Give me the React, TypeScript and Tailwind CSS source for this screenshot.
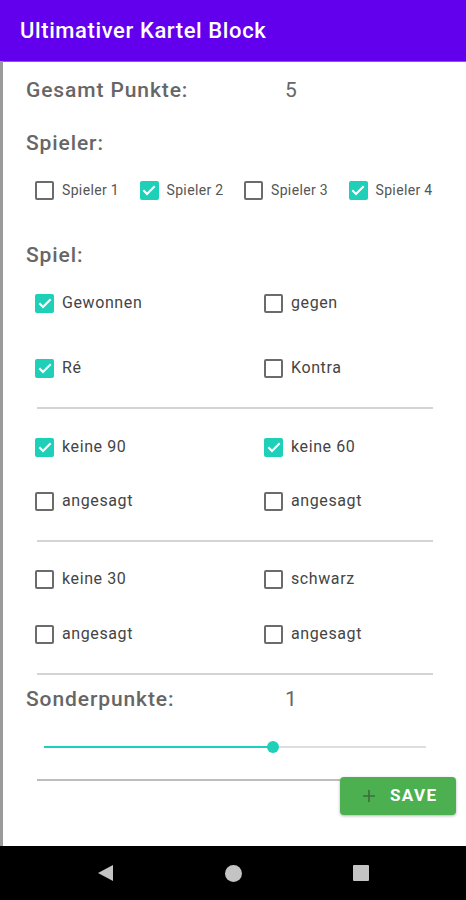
import { useState } from "react";

const font = { fontFamily: "Roboto, 'Liberation Sans', sans-serif" };

function Box({ checked, onClick }: { checked: boolean; onClick: () => void }) {
  return (
    <button
      type="button"
      onClick={onClick}
      className={
        checked
          ? "flex h-[19px] w-[19px] shrink-0 items-center justify-center rounded-[2px] bg-[#1dd0b7]"
          : "h-[19px] w-[19px] shrink-0 rounded-[2px] border-2 border-[#6b6b6b] bg-white"
      }
    >
      {checked && (
        <svg width="16" height="16" viewBox="0 0 24 24" fill="none">
          <path d="M3.5 12.5l5.5 5.5L20.5 6.5" stroke="white" strokeWidth="3.2" />
        </svg>
      )}
    </button>
  );
}

function Check({
  label,
  checked,
  onToggle,
  small,
}: {
  label: string;
  checked: boolean;
  onToggle: () => void;
  small?: boolean;
}) {
  return (
    <label className="flex h-[24px] items-center gap-[8px]">
      <Box checked={checked} onClick={onToggle} />
      <span
        className={
          small
            ? "text-[14px] tracking-[0.35px] text-[#555]"
            : "text-[16px] tracking-[0.6px] text-[#444]"
        }
      >
        {label}
      </span>
    </label>
  );
}

function Divider({ className = "" }: { className?: string }) {
  return <div className={"ml-[34px] h-[2px] w-[396px] bg-[#d4d4d4] " + className} />;
}

export default function App() {
  const [players, setPlayers] = useState([false, true, false, true]);
  const [state, setState] = useState<Record<string, boolean>>({
    gewonnen: true,
    gegen: false,
    re: true,
    kontra: false,
    k90: true,
    k60: true,
    a90: false,
    a60: false,
    k30: false,
    schwarz: false,
    a30: false,
    as: false,
  });
  const [sonder, setSonder] = useState(1);

  const toggle = (k: string) => setState((s) => ({ ...s, [k]: !s[k] }));

  const pair = (a: [string, string], b: [string, string], mt: string) => (
    <div className={"grid grid-cols-[229px_1fr] pl-[32px] " + mt}>
      <Check label={a[1]} checked={state[a[0]]} onToggle={() => toggle(a[0])} />
      <Check label={b[1]} checked={state[b[0]]} onToggle={() => toggle(b[0])} />
    </div>
  );

  return (
    <div className="flex h-[900px] w-[466px] flex-col bg-white" style={font}>
      <header className="flex h-[61px] shrink-0 items-center bg-[#6200ee] px-5 shadow-[0_1px_0_#8a4dff]">
        <h1 className="text-[22px] font-medium tracking-[0.6px] text-white">Ultimativer Kartel Block</h1>
      </header>

      <main className="h-[785px] shrink-0 border-l-[3px] border-[#9a9a9a]">
        <div className="mt-[16px] flex h-[28px] items-center pl-[23px] text-[21px] font-medium tracking-[0.9px] text-[#666]">
          <span className="w-[259px]">Gesamt Punkte:</span>
          <span className="font-normal">5</span>
        </div>

        <div className="mt-[25px] flex h-[28px] items-center pl-[23px] text-[21px] font-medium tracking-[0.9px] text-[#666]">
          Spieler:
        </div>

        <div className="mt-[20px] grid w-[450px] grid-cols-4 pl-[32px]">
          {players.map((p, i) => (
            <Check
              key={i}
              small
              label={`Spieler ${i + 1}`}
              checked={p}
              onToggle={() => setPlayers((ps) => ps.map((x, j) => (j === i ? !x : x)))}
            />
          ))}
        </div>

        <div className="mt-[40px] flex h-[28px] items-center pl-[23px] text-[21px] font-medium tracking-[0.9px] text-[#666]">
          Spiel:
        </div>

        {pair(["gewonnen", "Gewonnen"], ["gegen", "gegen"], "mt-[21px]")}
        {pair(["re", "Ré"], ["kontra", "Kontra"], "mt-[41px]")}
        <Divider className="mt-[27px]" />

        {pair(["k90", "keine 90"], ["k60", "keine 60"], "mt-[26px]")}
        {pair(["a90", "angesagt"], ["a60", "angesagt"], "mt-[30px]")}
        <Divider className="mt-[27px]" />

        {pair(["k30", "keine 30"], ["schwarz", "schwarz"], "mt-[25px]")}
        {pair(["a30", "angesagt"], ["as", "angesagt"], "mt-[31px]")}
        <Divider className="mt-[27px]" />

        <div className="mt-[11px] flex h-[28px] items-center pl-[23px] text-[21px] font-medium tracking-[0.9px] text-[#666]">
          <span className="w-[259px]">Sonderpunkte:</span>
          <span className="font-normal">{sonder}</span>
        </div>

        <div className="relative ml-[41px] mt-[23px] flex h-[20px] w-[382px] items-center">
          <div className="h-[2px] w-[229px] bg-[#1dd0b7]" />
          <div className="h-[2px] flex-1 bg-[#dedede]" />
          <button
            type="button"
            onClick={() => setSonder((s) => (s + 1) % 3)}
            className="absolute left-[223px] top-[4px] h-[12px] w-[12px] rounded-full bg-[#1dd0b7]"
          />
        </div>

        <div className="mt-[20px] flex h-[38px] items-start">
          <div className="ml-[34px] mt-[2px] h-[2px] w-[303px] bg-[#bdbdbd]" />
          <button
            type="button"
            className="flex h-[38px] w-[116px] items-center gap-[14px] rounded-[4px] bg-[#4caf50] pl-[22px] shadow-[0_1px_3px_rgba(0,0,0,0.3)]"
          >
            <svg width="14" height="14" viewBox="0 0 14 14">
              <path d="M7 1v12M1 7h12" stroke="#3b6e3e" strokeWidth="1.6" />
            </svg>
            <span className="text-[17px] font-bold tracking-[0.08em] text-white">SAVE</span>
          </button>
        </div>
      </main>

      <nav className="flex h-[54px] shrink-0 items-center bg-black">
        <div className="flex w-full items-center justify-between px-[97px]">
          <svg width="17" height="18" viewBox="0 0 17 18">
            <path d="M16 1v16L1 9z" fill="#c4c4c4" />
          </svg>
          <div className="h-[17px] w-[17px] rounded-full bg-[#c4c4c4]" />
          <div className="h-[16px] w-[16px] rounded-[1px] bg-[#c4c4c4]" />
        </div>
      </nav>
    </div>
  );
}
